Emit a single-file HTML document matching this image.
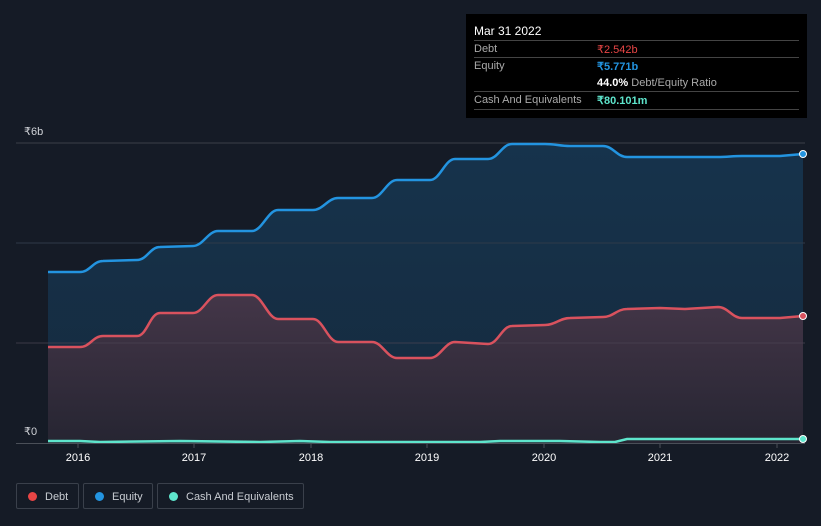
<!DOCTYPE html>
<html><head><meta charset="utf-8"><style>
body{margin:0;background:#151b26;width:821px;height:526px;overflow:hidden;font-family:"Liberation Sans",sans-serif;position:relative}
.tip{position:absolute;left:466px;top:14px;width:341px;height:104px;background:#000;color:#fff;font-size:11px}
.tip .r{position:absolute;left:8px;right:8px;border-top:1px solid #444;height:17px}
.tip .r span{position:absolute;top:2px}
.lg{position:absolute;top:483px;height:26px;border:1px solid #3a404b;border-radius:2px;color:#c8ccd2;font-size:11px;line-height:26px;box-sizing:border-box}
.lg i{position:absolute;left:11px;top:8px;width:9px;height:9px;border-radius:50%}
</style></head><body>
<svg width="821" height="526" style="position:absolute;left:0;top:0">
<defs><linearGradient id="dg" x1="0" y1="0" x2="0" y2="1"><stop offset="0" stop-color="#443648"/><stop offset="1" stop-color="#262532"/></linearGradient>
<linearGradient id="eg" x1="0" y1="0" x2="0" y2="1"><stop offset="0" stop-color="#16334c"/><stop offset="1" stop-color="#152a3e"/></linearGradient></defs>
<line x1="16" y1="143" x2="805" y2="143" stroke="#3a3f48"/>
<path d="M48,443 L48,272 L80,272 C90,272 93,261 103,261 L137,260 C147,260 150,247 160,247 L193,246 C203,246 208,231 218,231 L252,231 C262,231 268,210 278,210 L313,210 C323,210 328,198 338,198 L372,198 C382,198 387,180 397,180 L430,180 C440,180 445,159 455,159 L488,159 C498,159 502,144 512,144 L545,144 C555,144 560,146 570,146 L603,146 C613,146 617,157 627,157 L718,157 C728,157 732,156 742,156 L780,156 L803,154 L803,443 Z" fill="url(#eg)"/>
<line x1="16" y1="243" x2="805" y2="243" stroke="#2f3a48"/>
<path d="M48,443 L48,347 L80,347 C90,347 93,336 103,336 L137,336 C147,336 150,313 160,313 L193,313 C203,313 208,295 218,295 L252,295 C262,295 268,319 278,319 L313,319 C323,319 328,342 338,342 L372,342 C382,342 387,358 397,358 L430,358 C440,358 445,342 455,342 L488,344 C498,344 502,326 512,326 L545,325 C555,325 560,318 570,318 L603,317 C613,317 617,309 627,309 L660,308 L685,309 L718,307 C728,307 732,318 742,318 L780,318 L803,316 L803,443 Z" fill="url(#dg)"/>
<line x1="16" y1="343" x2="805" y2="343" stroke="#4a4452" stroke-opacity=".7"/>
<path d="M48,272 L80,272 C90,272 93,261 103,261 L137,260 C147,260 150,247 160,247 L193,246 C203,246 208,231 218,231 L252,231 C262,231 268,210 278,210 L313,210 C323,210 328,198 338,198 L372,198 C382,198 387,180 397,180 L430,180 C440,180 445,159 455,159 L488,159 C498,159 502,144 512,144 L545,144 C555,144 560,146 570,146 L603,146 C613,146 617,157 627,157 L718,157 C728,157 732,156 742,156 L780,156 L803,154" fill="none" stroke="#2394e0" stroke-width="2.5"/>
<path d="M48,347 L80,347 C90,347 93,336 103,336 L137,336 C147,336 150,313 160,313 L193,313 C203,313 208,295 218,295 L252,295 C262,295 268,319 278,319 L313,319 C323,319 328,342 338,342 L372,342 C382,342 387,358 397,358 L430,358 C440,358 445,342 455,342 L488,344 C498,344 502,326 512,326 L545,325 C555,325 560,318 570,318 L603,317 C613,317 617,309 627,309 L660,308 L685,309 L718,307 C728,307 732,318 742,318 L780,318 L803,316" fill="none" stroke="#d9525e" stroke-width="2.5"/>
<path d="M48,441 L80,441 L100,442 L180,441 L260,442 L300,441 L330,442 L480,442 L500,441 L560,441 L600,442 L615,442 L627,439 L680,439 L700,439 L803,439" fill="none" stroke="#5ee5cc" stroke-width="2.5"/>
<line x1="16" y1="443.5" x2="805" y2="443.5" stroke="#4a4f58"/>
<g stroke="#4a4f58"><line x1="78" y1="444" x2="78" y2="448"/><line x1="194" y1="444" x2="194" y2="448"/><line x1="311" y1="444" x2="311" y2="448"/><line x1="427" y1="444" x2="427" y2="448"/><line x1="544" y1="444" x2="544" y2="448"/><line x1="660" y1="444" x2="660" y2="448"/><line x1="777" y1="444" x2="777" y2="448"/></g>
<circle cx="803" cy="154" r="3.5" fill="#2394e0" stroke="#fff" stroke-width="1"/>
<circle cx="803" cy="316" r="3.5" fill="#d9525e" stroke="#fff" stroke-width="1"/>
<circle cx="803" cy="439" r="3.5" fill="#5ee5cc" stroke="#fff" stroke-width="1"/>
<g fill="#fff" font-size="11" font-family="Liberation Sans,sans-serif" text-anchor="middle">
<text x="78" y="461">2016</text><text x="194" y="461">2017</text><text x="311" y="461">2018</text><text x="427" y="461">2019</text><text x="544" y="461">2020</text><text x="660" y="461">2021</text><text x="777" y="461">2022</text></g>
<g fill="#d0d3d8" font-size="11" font-family="Liberation Sans,sans-serif"><text x="24" y="135">₹6b</text><text x="24" y="435">₹0</text></g>
</svg>
<div class="tip">
<div style="position:absolute;left:8px;top:10px;font-size:12px">Mar 31 2022</div>
<div class="r" style="top:26px"><span style="color:#aaa">Debt</span><span style="left:123px;color:#e84545">₹2.542b</span></div>
<div class="r" style="top:43px"><span style="color:#aaa">Equity</span><span style="left:123px;color:#2394e0;font-weight:bold">₹5.771b</span></div>
<div style="position:absolute;left:131px;top:63px;white-space:nowrap"><b>44.0%</b> <span style="color:#aaa">Debt/Equity Ratio</span></div>
<div class="r" style="top:77px"><span style="color:#aaa">Cash And Equivalents</span><span style="left:123px;color:#5ee5cc;font-weight:bold">₹80.101m</span></div>
<div class="r" style="top:95px;height:0"></div>
</div>
<div class="lg" style="left:16px;width:63px"><i style="background:#e84545"></i><span style="position:absolute;left:28px">Debt</span></div>
<div class="lg" style="left:83px;width:70px"><i style="background:#2394e0"></i><span style="position:absolute;left:28px">Equity</span></div>
<div class="lg" style="left:157px;width:147px"><i style="background:#5ee5cc"></i><span style="position:absolute;left:28px">Cash And Equivalents</span></div>
</body></html>
